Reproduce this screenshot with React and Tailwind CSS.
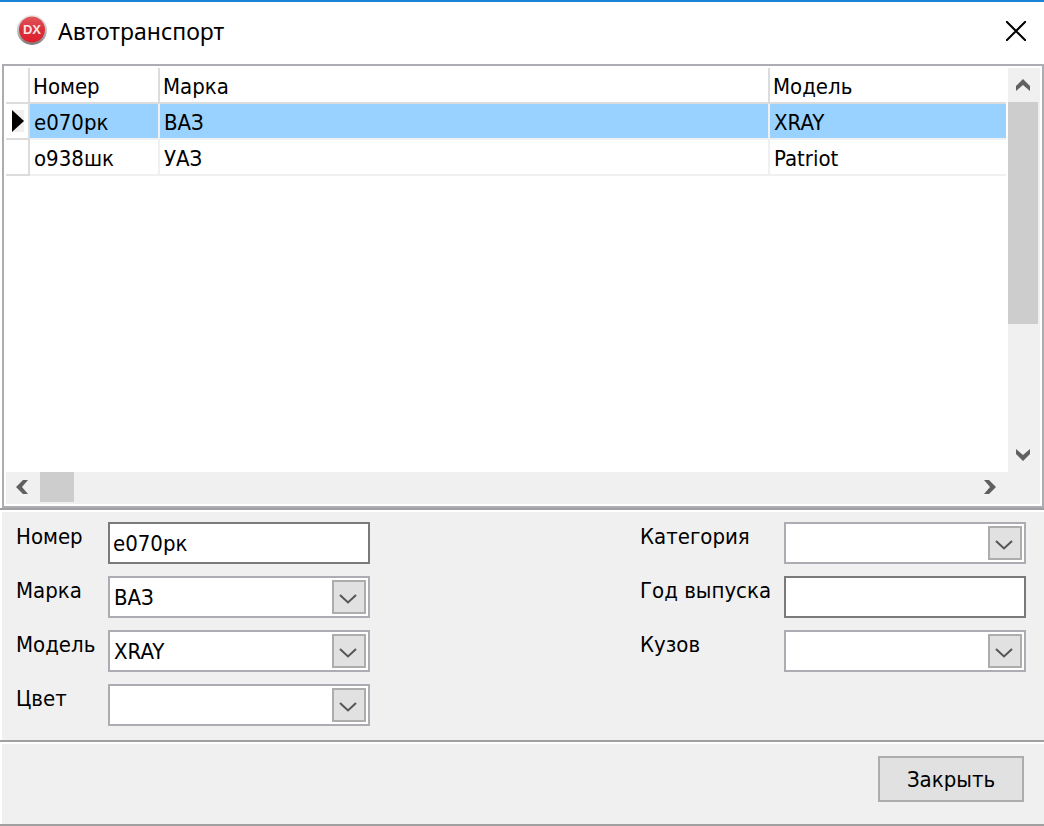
import React, { useState } from "react";

const VEHICLES = [
  { number: "е070рк", brand: "ВАЗ", model: "XRAY" },
  { number: "о938шк", brand: "УАЗ", model: "Patriot" },
];

const BRANDS = ["", "ВАЗ", "УАЗ"];
const MODELS = ["", "XRAY", "Patriot"];

function AppLogo() {
  return (
    <svg viewBox="0 0 32 32" className="h-8 w-8 shrink-0" aria-hidden="true">
      <defs>
        <linearGradient id="rim" x1="0" y1="0" x2="0" y2="1">
          <stop offset="0" stopColor="#ececec" />
          <stop offset="0.5" stopColor="#c4c4c4" />
          <stop offset="1" stopColor="#777777" />
        </linearGradient>
        <linearGradient id="disc" x1="0" y1="0" x2="0" y2="1">
          <stop offset="0" stopColor="#e2585c" />
          <stop offset="0.5" stopColor="#d9303a" />
          <stop offset="1" stopColor="#e01f2c" />
        </linearGradient>
      </defs>
      <circle cx="16" cy="15" r="15" fill="url(#rim)" />
      <circle cx="16" cy="14.5" r="13" fill="url(#disc)" />
      <text
        x="16"
        y="19"
        textAnchor="middle"
        fontSize="13"
        fontWeight="bold"
        fill="#fbe4e5"
        fontFamily="'Liberation Sans', sans-serif"
      >
        DX
      </text>
    </svg>
  );
}

const ARROWS = {
  up: "7,0 14,7 14,12 7,6 0,12 0,7",
  down: "7,12 14,5 14,0 7,6 0,0 0,5",
  left: "0,7 7,0 12,0 6,7 12,14 7,14",
  right: "12,7 5,0 0,0 6,7 0,14 5,14",
};

function ScrollArrow({ dir, label }) {
  const vertical = dir === "up" || dir === "down";
  return (
    <button
      type="button"
      aria-label={label}
      className={`flex shrink-0 items-center justify-center hover:bg-[#dadada] ${vertical ? "h-[34px] w-[30px]" : "h-[30px] w-8"}`}
    >
      <svg
        width={vertical ? 14 : 12}
        height={vertical ? 12 : 14}
        fill="#606060"
      >
        <polygon points={ARROWS[dir]} />
      </svg>
    </button>
  );
}

function TextField({ id, label, value, onChange }) {
  return (
    <>
      <label htmlFor={id} className="leading-[30px] whitespace-nowrap">
        {label}
      </label>
      <input
        id={id}
        type="text"
        value={value}
        onChange={(e) => onChange(e.target.value)}
        className="h-[42px] w-full border-2 border-[#7a7a7a] bg-white px-[3px] outline-none focus:border-[#0078d7]"
      />
    </>
  );
}

function SelectField({ id, label, value, options, onChange }) {
  return (
    <>
      <label htmlFor={id} className="leading-[30px] whitespace-nowrap">
        {label}
      </label>
      <div className="relative">
        <select
          id={id}
          value={value}
          onChange={(e) => onChange(e.target.value)}
          className="h-[42px] w-full appearance-none border-2 border-[#abadb3] bg-white pt-0.5 pr-10 pl-1 outline-none focus:border-[#0078d7]"
        >
          {options.map((option) => (
            <option key={option} value={option}>
              {option}
            </option>
          ))}
        </select>
        <span className="pointer-events-none absolute top-1 right-1 flex h-[34px] w-[34px] items-center justify-center border-2 border-[#adadad] bg-[#e1e1e1] pt-1 pr-0.5">
          <svg width="18" height="10" fill="none" stroke="#555555">
            <path d="M1 1 9 8.5 17 1" strokeWidth="2" />
          </svg>
        </span>
      </div>
    </>
  );
}

function VehicleTable({ selected, onSelect }) {
  return (
    <table className="w-full table-fixed border-separate border-spacing-0 self-start text-left">
      <colgroup>
        <col className="w-6" />
        <col className="w-[130px]" />
        <col />
        <col className="w-[236px]" />
      </colgroup>
      <thead>
        <tr className="h-9">
          <th className="border-r-2 border-b-2 border-[#dcdcdc] p-0" />
          <th className="border-r-2 border-b-2 border-[#dcdcdc] pt-[3px] pr-0 pb-0 pl-[3px] font-normal">
            Номер
          </th>
          <th className="border-r-2 border-b-2 border-[#dcdcdc] pt-[3px] pr-0 pb-0 pl-[3px] font-normal">
            Марка
          </th>
          <th className="border-b-2 border-[#dcdcdc] pt-[3px] pr-0 pb-0 pl-[3px] font-normal">
            Модель
          </th>
        </tr>
      </thead>
      <tbody>
        {VEHICLES.map((vehicle, index) => {
          const active = index === selected;
          return (
            <tr
              key={vehicle.number}
              onClick={() => onSelect(index)}
              className={`h-9 cursor-default ${active ? "bg-[#99d1ff]" : "bg-white"}`}
            >
              <td className="border-r-2 border-b-2 border-[#dcdcdc] bg-white p-0">
                {active && (
                  <svg width="12" height="22" className="ml-1.5 bg-[#f0f0f0]">
                    <polygon points="0,0 12,11 0,22" fill="#000000" />
                  </svg>
                )}
              </td>
              <td className="border-r-2 border-b-2 border-[#f0f0f0] pt-[3px] pr-0 pb-0 pl-1">
                {vehicle.number}
              </td>
              <td className="border-r-2 border-b-2 border-[#f0f0f0] pt-[3px] pr-0 pb-0 pl-1">
                {vehicle.brand}
              </td>
              <td className="border-b-2 border-[#f0f0f0] pt-[3px] pr-0 pb-0 pl-1">
                {vehicle.model}
              </td>
            </tr>
          );
        })}
      </tbody>
    </table>
  );
}

export default function App() {
  const [selected, setSelected] = useState(0);
  const [form, setForm] = useState({
    ...VEHICLES[0],
    color: "",
    category: "",
    year: "",
    body: "",
  });

  const setField = (name) => (value) => setForm({ ...form, [name]: value });

  const handleSelect = (index) => {
    setSelected(index);
    setForm({ ...form, ...VEHICLES[index] });
  };

  return (
    <div className="flex min-h-screen flex-col border-t-2 border-[#1883d7] bg-white font-['DejaVu_Sans_Condensed','DejaVu_Sans',sans-serif] text-[22px] leading-7 text-black">
      <header className="flex h-[62px] items-center justify-between pr-[18px] pb-1 pl-4">
        <div className="flex items-center gap-2.5">
          <AppLogo />
          <h1 className="font-['Noto_Sans',sans-serif] text-[23px]">
            Автотранспорт
          </h1>
        </div>
        <button type="button" aria-label="Закрыть окно">
          <svg width="20" height="20" stroke="#000000" strokeWidth="2">
            <path d="M0 0 20 20M20 0 0 20" />
          </svg>
        </button>
      </header>

      <main className="ml-0.5 grid flex-1 grid-cols-[1fr_34px] grid-rows-[1fr_32px] border-2 border-[#abadb3] p-0.5">
        <VehicleTable selected={selected} onSelect={handleSelect} />
        <div className="ml-0.5 flex flex-col bg-[#f0f0f0]">
          <ScrollArrow dir="up" label="Вверх" />
          <div className="flex-1">
            <div className="h-[222px] w-[30px] bg-[#cdcdcd]" />
          </div>
          <ScrollArrow dir="down" label="Вниз" />
        </div>
        <div className="col-span-2 flex bg-[#f0f0f0] pr-[34px]">
          <ScrollArrow dir="left" label="Влево" />
          <div className="flex-1 pl-0.5">
            <div className="h-[30px] w-[34px] bg-[#cdcdcd]" />
          </div>
          <ScrollArrow dir="right" label="Вправо" />
        </div>
      </main>

      <section className="border-t-2 border-[#a0a0a0]">
        <div className="flex items-start justify-between border-t-2 border-l-2 border-white bg-[#f0f0f0] pt-2.5 pr-[18px] pb-3.5 pl-3.5">
          <div className="grid grid-cols-[92px_262px] gap-y-3">
            <TextField
              id="number"
              label="Номер"
              value={form.number}
              onChange={setField("number")}
            />
            <SelectField
              id="brand"
              label="Марка"
              value={form.brand}
              options={BRANDS}
              onChange={setField("brand")}
            />
            <SelectField
              id="model"
              label="Модель"
              value={form.model}
              options={MODELS}
              onChange={setField("model")}
            />
            <SelectField
              id="color"
              label="Цвет"
              value={form.color}
              options={["", "Белый", "Чёрный"]}
              onChange={setField("color")}
            />
          </div>
          <div className="grid grid-cols-[144px_242px] gap-y-3">
            <SelectField
              id="category"
              label="Категория"
              value={form.category}
              options={["", "B", "C"]}
              onChange={setField("category")}
            />
            <TextField
              id="year"
              label="Год выпуска"
              value={form.year}
              onChange={setField("year")}
            />
            <SelectField
              id="body"
              label="Кузов"
              value={form.body}
              options={["", "Хэтчбек", "Внедорожник"]}
              onChange={setField("body")}
            />
          </div>
        </div>
      </section>

      <footer className="border-y-2 border-[#a0a0a0]">
        <div className="flex justify-end border-t-2 border-l-2 border-white bg-[#f0f0f0] pt-3 pr-5 pb-[22px]">
          <button
            type="button"
            className="h-[46px] w-[146px] border-2 border-[#adadad] bg-[#e1e1e1] pt-0.5 hover:border-[#0078d7] hover:bg-[#e5f1fb]"
          >
            Закрыть
          </button>
        </div>
      </footer>
    </div>
  );
}
